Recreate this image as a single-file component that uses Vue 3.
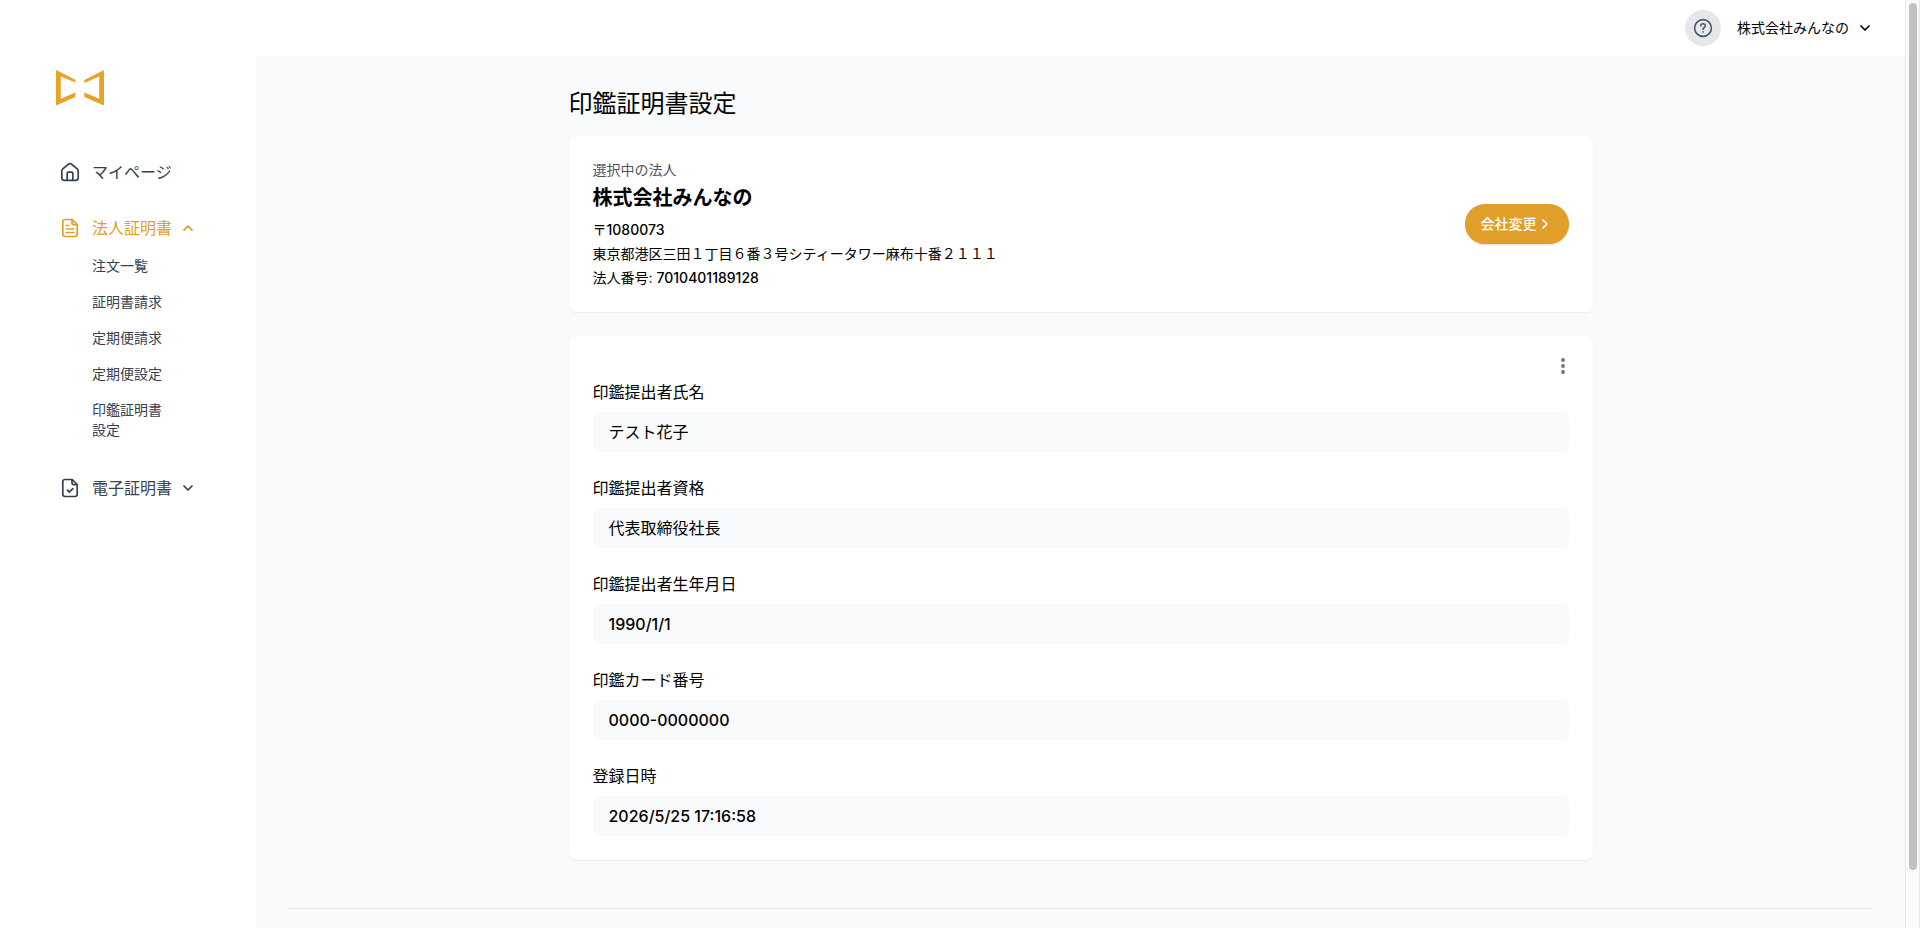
<script setup>
const certificateLinks = ['注文一覧', '証明書請求', '定期便請求', '定期便設定', '印鑑証明書設定']

const fields = [
  { id: 'name', label: '印鑑提出者氏名', value: 'テスト花子' },
  { id: 'title', label: '印鑑提出者資格', value: '代表取締役社長' },
  { id: 'birth', label: '印鑑提出者生年月日', value: '1990/1/1', numeric: true },
  { id: 'card', label: '印鑑カード番号', value: '0000-0000000', numeric: true },
  { id: 'created', label: '登録日時', value: '2026/5/25 17:16:58', numeric: true },
]
</script>

<template>
  <div class="app">
    <aside class="sidebar">
      <a class="logo" href="#" aria-label="ホーム">
        <svg width="48" height="36" viewBox="0 0 48 36" fill="#e9a228">
          <path d="M0 0 19.300 9.800V12.600L4.800 6.600V28.800L19.300 22.600V27L0 35.500Z" />
          <path d="M48 0 28.300 10V13L43.200 6.600V28.800L28.300 22.600V27L48 35.500Z" />
        </svg>
      </a>
      <nav class="nav">
        <a class="item" href="#">
          <svg class="icon" viewBox="0 0 20 20">
            <path d="M1.800 9Q1.800 7.700 2.800 6.900L8.700 2Q10 1 11.300 2L17.200 6.900Q18.200 7.700 18.200 9V15.800Q18.200 18.300 15.700 18.300H4.300Q1.800 18.300 1.800 15.800Z" />
            <path d="M7.200 18V11.200Q7.200 10.200 8.200 10.200H11.800Q12.800 10.200 12.800 11.200V18" />
          </svg>
          <span>マイページ</span>
        </a>
        <div>
          <button class="item active" type="button" aria-expanded="true">
            <svg class="icon" viewBox="0 0 20 20">
              <path d="M12.200 1.500H5Q2.800 1.500 2.800 3.700V16.300Q2.800 18.500 5 18.500H15Q17.200 18.500 17.200 16.300V6.500Z" />
              <path d="M12 1.700V4.800Q12 6.700 13.900 6.700H17M6.300 7.500H8.500M6.300 11H13.700M6.300 14.500H13.700" />
            </svg>
            <span>法人証明書</span>
            <svg class="chevron" viewBox="0 0 16 16"><path d="M4 10.200 8 6.200 12 10.200" /></svg>
          </button>
          <ul class="submenu">
            <li v-for="link in certificateLinks" :key="link"><a href="#">{{ link }}</a></li>
          </ul>
        </div>
        <button class="item" type="button" aria-expanded="false">
          <svg class="icon" viewBox="0 0 20 20">
            <path d="M12.200 1.500H5Q2.800 1.500 2.800 3.700V16.300Q2.800 18.500 5 18.500H15Q17.200 18.500 17.200 16.300V6.500Z" />
            <path d="M12 1.700V4.800Q12 6.700 13.900 6.700H17M7.400 12.200 9.300 14.100 12.800 10.600" />
          </svg>
          <span>電子証明書</span>
          <svg class="chevron" viewBox="0 0 16 16"><path d="M4 6 8 10 12 6" /></svg>
        </button>
      </nav>
    </aside>

    <div class="body">
      <header class="topbar">
        <button class="help" type="button" aria-label="ヘルプ">
          <svg width="20" height="20" viewBox="0 0 20 20">
            <circle cx="10" cy="10" r="8.400" />
            <path d="M7.700 7.800Q8 5.700 10 5.700T12.300 7.800Q12.300 9 11 9.700T10 11.300" />
            <path d="M10 13.900V14.100" />
          </svg>
        </button>
        <button class="account" type="button">
          <span>株式会社みんなの</span>
          <svg class="chevron" viewBox="0 0 16 16"><path d="M4 6 8 10 12 6" /></svg>
        </button>
      </header>

      <main class="main">
        <div class="content">
          <h1>印鑑証明書設定</h1>

          <section class="card company">
            <div>
              <p class="caption">選択中の法人</p>
              <h2>株式会社みんなの</h2>
              <p>〒<span class="numeric">1080073</span></p>
              <p>東京都港区三田１丁目６番３号シティータワー麻布十番２１１１</p>
              <p>法人番号: <span class="numeric">7010401189128</span></p>
            </div>
            <button class="change" type="button">
              <span>会社変更</span>
              <svg class="chevron" viewBox="0 0 16 16"><path d="M6 4 10 8 6 12" /></svg>
            </button>
          </section>

          <section class="card">
            <div class="tools">
              <button class="kebab" type="button" aria-label="メニュー">
                <svg width="12" height="20" viewBox="0 0 12 20">
                  <circle cx="6" cy="4" r="1.900" />
                  <circle cx="6" cy="10" r="1.900" />
                  <circle cx="6" cy="16" r="1.900" />
                </svg>
              </button>
            </div>
            <dl class="fields">
              <div v-for="field in fields" :key="field.id">
                <dt>{{ field.label }}</dt>
                <dd :class="{ numeric: field.numeric }">{{ field.value }}</dd>
              </div>
            </dl>
          </section>
        </div>
        <hr />
      </main>
    </div>

    <div class="scrollbar" aria-hidden="true"><div class="thumb"></div></div>
  </div>
</template>

<style>
body {
  margin: 0;
}
</style>

<style scoped>
.app {
  display: flex;
  height: 100vh;
  overflow: hidden;
  background: #fff;
  color: #000;
  font-family: Inter, "Noto Sans CJK JP", sans-serif;
  font-size: 14px;
  font-weight: 400;
  line-height: 20px;
}
.app * {
  box-sizing: border-box;
}
p, h1, h2, ul, dl, dd {
  margin: 0;
  padding: 0;
}
button {
  margin: 0;
  padding: 0;
  border: 0;
  background: none;
  color: inherit;
  font: inherit;
  cursor: pointer;
}
a {
  color: inherit;
  text-decoration: none;
}
svg {
  display: block;
  flex: none;
}
.numeric {
  font-weight: 500;
}

.sidebar {
  flex: none;
  width: 256px;
  padding: 70px 0 0 56px;
  color: #374151;
}
.logo {
  display: block;
  width: 48px;
}
.nav {
  display: flex;
  flex-direction: column;
  gap: 32px;
  padding: 54px 0 0 4px;
}
.item {
  display: flex;
  align-items: center;
  font-size: 16px;
  line-height: 24px;
}
.item span {
  margin: 0 8px 0 12px;
}
.active {
  color: #e09f28;
}
.icon {
  width: 20px;
  height: 20px;
}
.icon,
.chevron {
  fill: none;
  stroke: currentColor;
  stroke-width: 1.7;
  stroke-linecap: round;
  stroke-linejoin: round;
}
.chevron {
  width: 16px;
  height: 16px;
}
.submenu {
  display: flex;
  flex-direction: column;
  gap: 16px;
  width: 80px;
  margin-left: 32px;
  padding: 16px 0 4px;
  list-style: none;
}
.submenu a {
  display: block;
}

.body {
  display: flex;
  flex: 1;
  flex-direction: column;
  min-width: 0;
}
.topbar {
  display: flex;
  flex: none;
  align-items: center;
  justify-content: flex-end;
  gap: 16px;
  padding: 10px 32px;
}
.help {
  display: grid;
  place-items: center;
  width: 36px;
  height: 36px;
  border-radius: 50%;
  background: #e5e7eb;
  color: #4b5563;
}
.help svg {
  fill: none;
  stroke: currentColor;
  stroke-width: 1.6;
  stroke-linecap: round;
}
.account {
  display: flex;
  align-items: center;
  gap: 8px;
}

.main {
  flex: 1;
  padding: 32px 32px 0;
  background: #f9fafc;
}
.content {
  max-width: 1024px;
  margin: 0 auto 48px;
}
h1 {
  margin-bottom: 16px;
  font-size: 24px;
  font-weight: 400;
  line-height: 32px;
}
.card {
  padding: 24px;
  border-radius: 8px;
  background: #fff;
  box-shadow: 0 1px 2px rgba(0, 0, 0, 0.06);
}
.company {
  display: flex;
  align-items: center;
  justify-content: space-between;
  margin-bottom: 24px;
}
.company h2 {
  margin: 4px 0 8px;
  font-size: 20px;
  font-weight: 700;
  line-height: 28px;
}
.company p + p {
  margin-top: 4px;
}
.company .caption {
  color: #4b5563;
}
.change {
  display: flex;
  align-items: center;
  padding: 10px 16px;
  border-radius: 20px;
  background: #e09f28;
  box-shadow: 0 1px 2px rgba(0, 0, 0, 0.15);
  color: #fff;
  font-weight: 500;
}
.tools {
  display: flex;
  justify-content: flex-end;
  margin: -4px 0 4px;
}
.kebab {
  color: #6b7280;
}
.kebab svg {
  fill: currentColor;
}
.fields {
  display: flex;
  flex-direction: column;
  gap: 24px;
  font-size: 16px;
  line-height: 24px;
}
dd {
  margin-top: 8px;
  padding: 8px 16px;
  border-radius: 6px;
  background: #f9fafc;
}
hr {
  height: 1px;
  margin: 0;
  border: 0;
  background: #e5e7eb;
}

.scrollbar {
  flex: none;
  width: 15px;
  padding: 3px;
  border: solid #e8e8e8;
  border-width: 0 1px;
  background: #fafafa;
}
.thumb {
  width: 8px;
  height: 94%;
  border-radius: 4px;
  background: #c1c1c1;
}
</style>
